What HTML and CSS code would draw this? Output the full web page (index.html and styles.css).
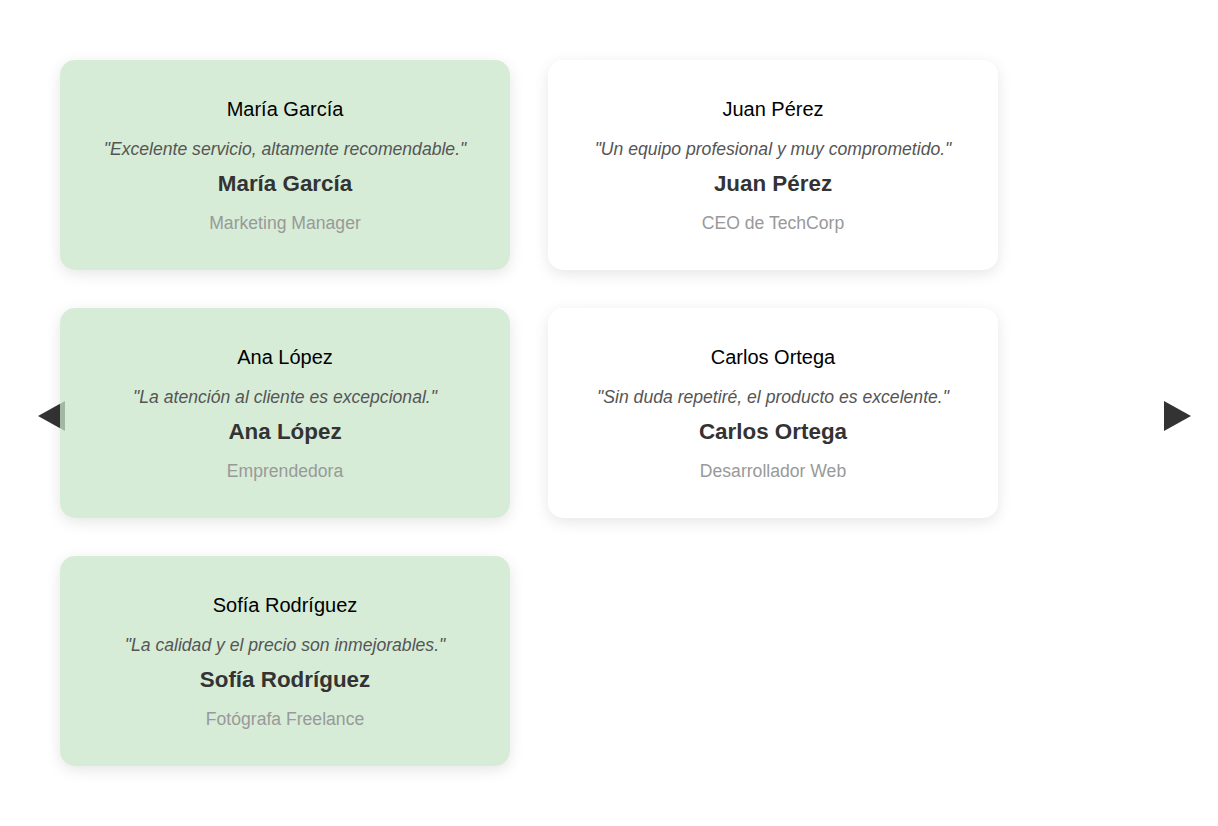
FILE: index.html
```html
<!DOCTYPE html>
<html lang="es">
<head>
<meta charset="utf-8">
<title>Testimonios</title>
<link rel="stylesheet" href="styles.css">
</head>
<body>
<div class="carousel">
  <button class="nav nav-prev" aria-label="Anterior">
    <svg width="27" height="30" viewBox="0 0 27 30"><polygon points="27,0 27,30 0,15" fill="#333"/></svg>
  </button>
  <div class="grid">
    <div class="card card-green">
      <h3 class="title">María García</h3>
      <p class="quote">"Excelente servicio, altamente recomendable."</p>
      <h4 class="name">María García</h4>
      <p class="role">Marketing Manager</p>
    </div>
    <div class="card card-white">
      <h3 class="title">Juan Pérez</h3>
      <p class="quote">"Un equipo profesional y muy comprometido."</p>
      <h4 class="name">Juan Pérez</h4>
      <p class="role">CEO de TechCorp</p>
    </div>
    <div class="card card-green">
      <h3 class="title">Ana López</h3>
      <p class="quote">"La atención al cliente es excepcional."</p>
      <h4 class="name">Ana López</h4>
      <p class="role">Emprendedora</p>
    </div>
    <div class="card card-white">
      <h3 class="title">Carlos Ortega</h3>
      <p class="quote">"Sin duda repetiré, el producto es excelente."</p>
      <h4 class="name">Carlos Ortega</h4>
      <p class="role">Desarrollador Web</p>
    </div>
    <div class="card card-green">
      <h3 class="title">Sofía Rodríguez</h3>
      <p class="quote">"La calidad y el precio son inmejorables."</p>
      <h4 class="name">Sofía Rodríguez</h4>
      <p class="role">Fotógrafa Freelance</p>
    </div>
  </div>
  <button class="nav nav-next" aria-label="Siguiente">
    <svg width="27" height="30" viewBox="0 0 27 30"><polygon points="0,0 0,30 27,15" fill="#333"/></svg>
  </button>
</div>
</body>
</html>
```
FILE: styles.css
```css
html, body {
  margin: 0;
  padding: 0;
  background: #fff;
}
body {
  font-family: "Liberation Sans", Arial, sans-serif;
  width: 1218px;
  height: 826px;
  overflow: hidden;
}
.carousel {
  position: relative;
  height: 826px;
}
.grid {
  display: grid;
  grid-template-columns: 450px 450px;
  grid-auto-rows: 210px;
  column-gap: 38px;
  row-gap: 38px;
  padding: 60px 0 0 60px;
}
.card {
  position: relative;
  z-index: 1;
  box-sizing: border-box;
  border-radius: 15px;
  padding: 38px 20px 37px;
  text-align: center;
  box-shadow: 0 4px 15px rgba(0, 0, 0, 0.1);
}
.card-green {
  background: rgba(200, 230, 201, 0.75);
}
.card-white {
  background: #fff;
}
.title {
  margin: 0 0 18px;
  font-size: 20px;
  line-height: 23px;
  font-weight: normal;
  color: #000;
}
.quote {
  margin: 0 0 12px;
  font-size: 17.6px;
  line-height: 20px;
  font-style: italic;
  color: #555;
}
.name {
  margin: 0 0 16px;
  font-size: 22.4px;
  line-height: 26px;
  font-weight: bold;
  color: #333;
}
.role {
  margin: 0;
  font-size: 17.6px;
  line-height: 20px;
  color: #999;
}
.nav {
  position: absolute;
  top: 401px;
  z-index: 0;
  width: 27px;
  height: 30px;
  padding: 0;
  margin: 0;
  border: 0;
  background: none;
  cursor: pointer;
  line-height: 0;
}
.nav svg {
  display: block;
}
.nav-prev {
  left: 38px;
}
.nav-next {
  left: 1164px;
}
```
